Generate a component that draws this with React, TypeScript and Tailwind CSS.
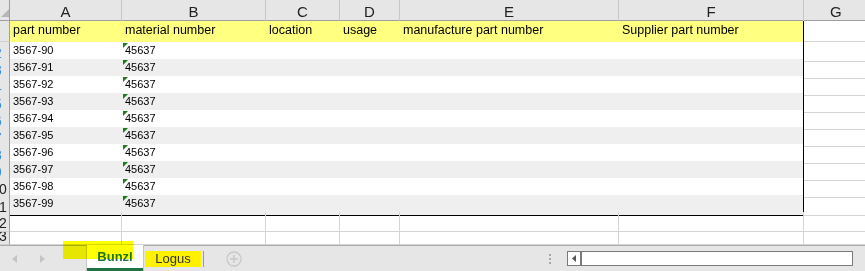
import React from "react";

const cols = [
  { l: "A", w: 112 },
  { l: "B", w: 144 },
  { l: "C", w: 74 },
  { l: "D", w: 60 },
  { l: "E", w: 219 },
  { l: "F", w: 185 },
];

const tmpl = "grid grid-cols-[10px_112px_144px_74px_60px_219px_185px_1fr]";

function RowHead({ label, blue }: { label: string; blue?: boolean }) {
  return (
    <div className="h-full overflow-hidden bg-[#e6e6e6] border-r border-[#9f9f9f] border-b border-b-[#cfcfcf] flex items-end">
      <span
        className={
          (blue ? "text-[#3f8fd8] ml-[-6px] " : "text-[#222] ml-[-1px] ") +
          "text-[14px] leading-[13px] mb-[1px]"
        }
      >
        {label}
      </span>
    </div>
  );
}

function Tri() {
  return (
    <svg width="5" height="5" className="absolute left-[1px] top-[1px]" viewBox="0 0 5 5">
      <polygon points="0,0 5,0 0,5" fill="#1d7a1d" />
    </svg>
  );
}

export default function App() {
  const data = Array.from({ length: 10 }, (_, i) => `3567-9${i}`);
  const font = { fontFamily: '"Liberation Sans", Arial, sans-serif' };
  return (
    <div className="w-[865px] h-[271px] overflow-hidden bg-white relative" style={font}>
      {/* column header */}
      <div className={tmpl + " h-[21px] bg-[#e6e6e6] border-b border-[#9f9f9f]"}>
        <div className="relative border-r border-[#9f9f9f]">
          <svg width="8" height="8" className="absolute left-[1px] top-[9px]" viewBox="0 0 8 8">
            <polygon points="8,0 8,8 0,8" fill="#b7b7b7" />
          </svg>
        </div>
        {cols.map((c) => (
          <div
            key={c.l}
            className="flex items-center justify-center border-r border-[#c6c6c6] text-[15px] text-[#222] pt-[1px]"
          >
            {c.l}
          </div>
        ))}
        <div className="flex items-center justify-start pl-[26px] text-[15px] text-[#222] pt-[1px]">G</div>
      </div>

      {/* header row 1 */}
      <div className={tmpl + " h-[21px]"}>
        <RowHead label="" />
        {[
          "part number",
          "material number",
          "location",
          "usage",
          "manufacture part number",
          "Supplier part number",
        ].map((t, i) => (
          <div
            key={i}
            className={
              "bg-[#ffff80] text-[12.5px] text-black flex items-end pb-[2px] pl-[3px] " +
              (i === 5 ? "border-r border-black" : "")
            }
          >
            {t}
          </div>
        ))}
        <div className="border-b border-[#d4d4d4]" />
      </div>

      {/* data rows */}
      {data.map((p, i) => (
        <div key={p} className={tmpl + " h-[17px]"}>
          <RowHead label={i < 8 ? String(i + 2) : String(i + 2).slice(1)} blue={i < 8} />
          <div
            className={
              "col-span-6 grid grid-cols-[112px_144px_74px_60px_219px_185px] border-r border-black " +
              (i % 2 === 1 ? "bg-[#efefef] " : "bg-white ") +
              (i === 9 ? "border-b border-b-black" : "")
            }
          >
            <div className="text-[11px] text-black pl-[3px] flex items-end pb-[3px]">{p}</div>
            <div className="relative text-[11px] text-black pl-[3px] flex items-end pb-[3px]">
              <Tri />
              45637
            </div>
            <div />
            <div />
            <div />
            <div />
          </div>
          <div className="border-b border-[#d4d4d4]" />
        </div>
      ))}

      {/* empty rows 12, 13 */}
      {[
        { l: "2", h: "h-[20px]" },
        { l: "3", h: "h-[13px]" },
      ].map((r) => (
        <div key={r.l} className={tmpl + " " + r.h}>
          <RowHead label={r.l} />
          {cols.map((c) => (
            <div key={c.l} className="border-r border-b border-[#d4d4d4]" />
          ))}
          <div className="border-b border-[#d4d4d4]" />
        </div>
      ))}

      {/* sheet tab bar */}
      <div className="h-[26px] bg-[#e6e6e6] border-t border-[#ababab] flex items-stretch relative">
        <div className="w-[86px] flex items-center">
          <svg width="6" height="8" className="ml-[12px]" viewBox="0 0 6 8">
            <polygon points="5,0 5,8 0,4" fill="#c4c4c4" />
          </svg>
          <svg width="6" height="8" className="ml-[22px]" viewBox="0 0 6 8">
            <polygon points="0,0 0,8 5,4" fill="#c4c4c4" />
          </svg>
        </div>
        <div className="w-[58px] bg-white border-l border-r border-[#c6c6c6] mt-[-1px] flex flex-col items-center justify-end">
          <span className="text-[13px] font-bold text-[#217346] leading-[15px] mb-[4px]">Bunzl</span>
          <div className="h-[3px] w-full bg-[#217346]" />
        </div>
        <div className="w-[60px] flex items-center pl-[1px]">
          <div className="h-[16px] w-[56px] bg-[#fff200] flex items-center justify-center text-[13px] text-[#333] mt-[1px]">
            Logus
          </div>
          <div className="h-[16px] w-px bg-[#9a9a9a] ml-[2px] mt-[1px]" />
        </div>
        <div className="w-[60px] flex items-center justify-center">
          <svg width="16" height="16" viewBox="0 0 16 16" className="mt-[1px]">
            <circle cx="8" cy="8" r="7" fill="none" stroke="#c8c8c8" strokeWidth="1.3" />
            <path d="M8 4v8M4 8h8" stroke="#c8c8c8" strokeWidth="1.5" />
          </svg>
        </div>
        <div className="flex-1" />
        <div className="w-[4px] flex flex-col items-center justify-center gap-[2px] mr-[15px]">
          <div className="w-[2px] h-[2px] bg-[#a8a8a8]" />
          <div className="w-[2px] h-[2px] bg-[#a8a8a8]" />
          <div className="w-[2px] h-[2px] bg-[#a8a8a8]" />
        </div>
        <div className="w-[286px] flex items-center mr-[12px]">
          <div className="h-[15px] w-full border border-[#7a7a7a] bg-white flex">
            <div className="w-[14px] flex items-center justify-center border-r-2 border-[#7a7a7a]">
              <svg width="4" height="7" viewBox="0 0 4 7">
                <polygon points="4,0 4,7 0,3.5" fill="#555" />
              </svg>
            </div>
          </div>
        </div>
      </div>

      {/* highlighter mark over Bunzl tab */}
      <div className="absolute left-[63px] top-[241px] w-[70px] h-[18px] bg-[#ffff00] mix-blend-multiply" />
    </div>
  );
}
